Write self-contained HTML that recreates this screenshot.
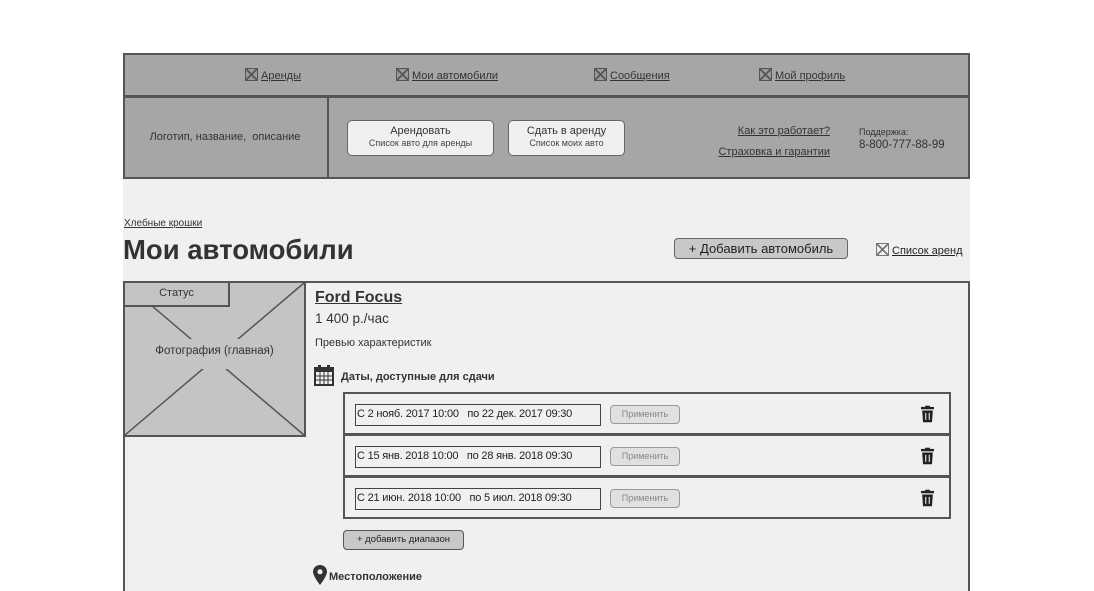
<!DOCTYPE html>
<html><head><meta charset="utf-8"><style>
*{margin:0;padding:0;box-sizing:border-box}
html,body{width:1094px;height:591px;overflow:hidden}
body{background:#fff;position:relative;font-family:"Liberation Sans","DejaVu Sans",sans-serif;color:#333}
.a{position:absolute}
u{text-decoration:underline}
.xi{display:inline-block;width:13px;height:13px;border:1.5px solid #555;vertical-align:-2px;margin-right:3px;background:linear-gradient(45deg,transparent 44%,#555 44%,#555 56%,transparent 56%),linear-gradient(-45deg,transparent 44%,#555 44%,#555 56%,transparent 56%),#999}
.nav{font-size:11px;color:#333}
.btn{background:#f0f0f0;border:1px solid #666;border-radius:5px;text-align:center}
.row{position:absolute;left:343px;width:608px;height:43px;border:2px solid #555}
.inp{position:absolute;left:10px;top:10px;width:246px;height:22px;border:1.5px solid #444;background:#f0f0f0;font-size:11px;line-height:19px;padding-left:1px;letter-spacing:-0.2px;color:#222}
.ap{position:absolute;left:265px;top:11px;width:70px;height:19px;border:1px solid #999;border-radius:4px;background:#e0e0e0;font-size:9px;color:#888;text-align:center;line-height:17px}
.tr{position:absolute;left:576px;top:11px;width:13px;height:18px}
</style></head><body>
<div class="a" style="left:123px;top:53px;width:847px;height:538px;background:#f0f0f0"></div>
<div class="a" style="left:123px;top:53px;width:847px;height:44px;background:#a6a6a6;border:2px solid #555"></div>
<div class="a" style="left:123px;top:95px;width:847px;height:84px;background:#a6a6a6;border:2px solid #555;border-top:3px solid #555"></div>
<div class="a" style="left:327px;top:97px;width:2px;height:82px;background:#555"></div>
<div class="a nav" style="left:245px;top:68px"><span class="xi"></span><u>Аренды</u></div>
<div class="a nav" style="left:396px;top:68px"><span class="xi"></span><u>Мои автомобили</u></div>
<div class="a nav" style="left:594px;top:68px"><span class="xi"></span><u>Сообщения</u></div>
<div class="a nav" style="left:759px;top:68px"><span class="xi"></span><u>Мой профиль</u></div>
<div class="a" style="left:130px;top:131px;width:190px;text-align:center;font-size:11px;color:#333">Логотип, название,&nbsp; описание</div>
<div class="a btn" style="left:347px;top:120px;width:147px;height:36px"><div style="font-size:11px;margin-top:4px;color:#333">Арендовать</div><div style="font-size:9px;color:#444;margin-top:1px">Список авто для аренды</div></div>
<div class="a btn" style="left:508px;top:120px;width:117px;height:36px"><div style="font-size:11px;margin-top:4px;color:#333">Сдать в аренду</div><div style="font-size:9px;color:#444;margin-top:1px">Список моих авто</div></div>
<div class="a" style="left:690px;top:121px;width:140px;text-align:right;font-size:11px;line-height:21px"><u>Как это работает?</u><br><u>Страховка и гарантии</u></div>
<div class="a" style="left:859px;top:127px;font-size:9px">Поддержка:</div>
<div class="a" style="left:859px;top:139px;font-size:11.5px">8-800-777-88-99</div>
<div class="a" style="left:124px;top:218px;font-size:10px"><u>Хлебные крошки</u></div>
<div class="a" style="left:123px;top:234px;font-size:27.5px;font-weight:bold;color:#333">Мои автомобили</div>
<div class="a btn" style="left:674px;top:238px;width:174px;height:21px;background:#c8c8c8;border-radius:4px;font-size:13px;line-height:19px;color:#222">+ Добавить автомобиль</div>
<div class="a" style="left:876px;top:243px;font-size:11px;color:#222"><span class="xi" style="border-color:#777;background:linear-gradient(45deg,transparent 44%,#777 44%,#777 56%,transparent 56%),linear-gradient(-45deg,transparent 44%,#777 44%,#777 56%,transparent 56%)"></span><u>Список аренд</u></div>
<div class="a" style="left:123px;top:281px;width:847px;height:310px;border:2px solid #555;border-bottom:none"></div>
<div class="a" style="left:123px;top:281px;width:183px;height:156px;background:#c4c4c4;border:2px solid #555"></div>
<svg class="a" style="left:123px;top:281px" width="183" height="156"><line x1="2" y1="2" x2="181" y2="154" stroke="#555" stroke-width="1.5"/><line x1="181" y1="2" x2="2" y2="154" stroke="#555" stroke-width="1.5"/><rect x="60" y="58" width="112" height="30" fill="#c4c4c4"/></svg>
<div class="a" style="left:123px;top:281px;width:107px;height:26px;background:#c4c4c4;border:2px solid #555;font-size:11px;text-align:center;line-height:20px">Статус</div>
<div class="a" style="left:123px;top:345px;width:183px;text-align:center;font-size:11.5px">Фотография (главная)</div>
<div class="a" style="left:315px;top:289px;font-size:16px;font-weight:bold"><u>Ford Focus</u></div>
<div class="a" style="left:315px;top:311px;font-size:13.5px">1 400 р./час</div>
<div class="a" style="left:315px;top:337px;font-size:11px">Превью характеристик</div>
<svg class="a" style="left:314px;top:365px" width="20" height="21"><rect x="1" y="3" width="18" height="17" fill="none" stroke="#333" stroke-width="2"/><rect x="1" y="3" width="18" height="4" fill="#333"/><path d="M1 11H19M1 15H19M6 7V20M10 7V20M14 7V20" stroke="#333" stroke-width="1"/><rect x="4" y="0" width="3" height="5" fill="#333"/><rect x="13" y="0" width="3" height="5" fill="#333"/></svg>
<div class="a" style="left:341px;top:371px;font-size:11px;font-weight:bold">Даты, доступные для сдачи</div>
<div class="row" style="top:392px"><div class="inp">С 2 нояб. 2017 10:00&nbsp;&nbsp; по 22 дек. 2017 09:30</div><div class="ap">Применить</div><svg class="tr" viewBox="0 0 11 14"><rect x="0" y="1" width="11" height="2" fill="#222"/><rect x="3.5" y="0" width="4" height="2" fill="#222"/><path d="M1 4H10L9.3 14H1.7Z" fill="#222"/><path d="M4 6V12M7 6V12" stroke="#ddd" stroke-width="1"/></svg></div>
<div class="row" style="top:434px"><div class="inp">С 15 янв. 2018 10:00&nbsp;&nbsp; по 28 янв. 2018 09:30</div><div class="ap">Применить</div><svg class="tr" viewBox="0 0 11 14"><rect x="0" y="1" width="11" height="2" fill="#222"/><rect x="3.5" y="0" width="4" height="2" fill="#222"/><path d="M1 4H10L9.3 14H1.7Z" fill="#222"/><path d="M4 6V12M7 6V12" stroke="#ddd" stroke-width="1"/></svg></div>
<div class="row" style="top:476px"><div class="inp">С 21 июн. 2018 10:00&nbsp;&nbsp; по 5 июл. 2018 09:30</div><div class="ap">Применить</div><svg class="tr" viewBox="0 0 11 14"><rect x="0" y="1" width="11" height="2" fill="#222"/><rect x="3.5" y="0" width="4" height="2" fill="#222"/><path d="M1 4H10L9.3 14H1.7Z" fill="#222"/><path d="M4 6V12M7 6V12" stroke="#ddd" stroke-width="1"/></svg></div>
<div class="a" style="left:343px;top:530px;width:121px;height:20px;border:1.5px solid #555;border-radius:4px;background:#c8c8c8;font-size:9.5px;text-align:center;line-height:17px;color:#222">+ добавить диапазон</div>
<svg class="a" style="left:313px;top:565px" width="14" height="20"><path d="M7 0C3.2 0 0 2.9 0 6.8 0 11.3 7 20 7 20S14 11.3 14 6.8C14 2.9 10.8 0 7 0Z" fill="#333"/><circle cx="7" cy="6.8" r="2.5" fill="#f0f0f0"/></svg>
<div class="a" style="left:329px;top:571px;font-size:11px;font-weight:bold">Местоположение</div>
</body></html>
